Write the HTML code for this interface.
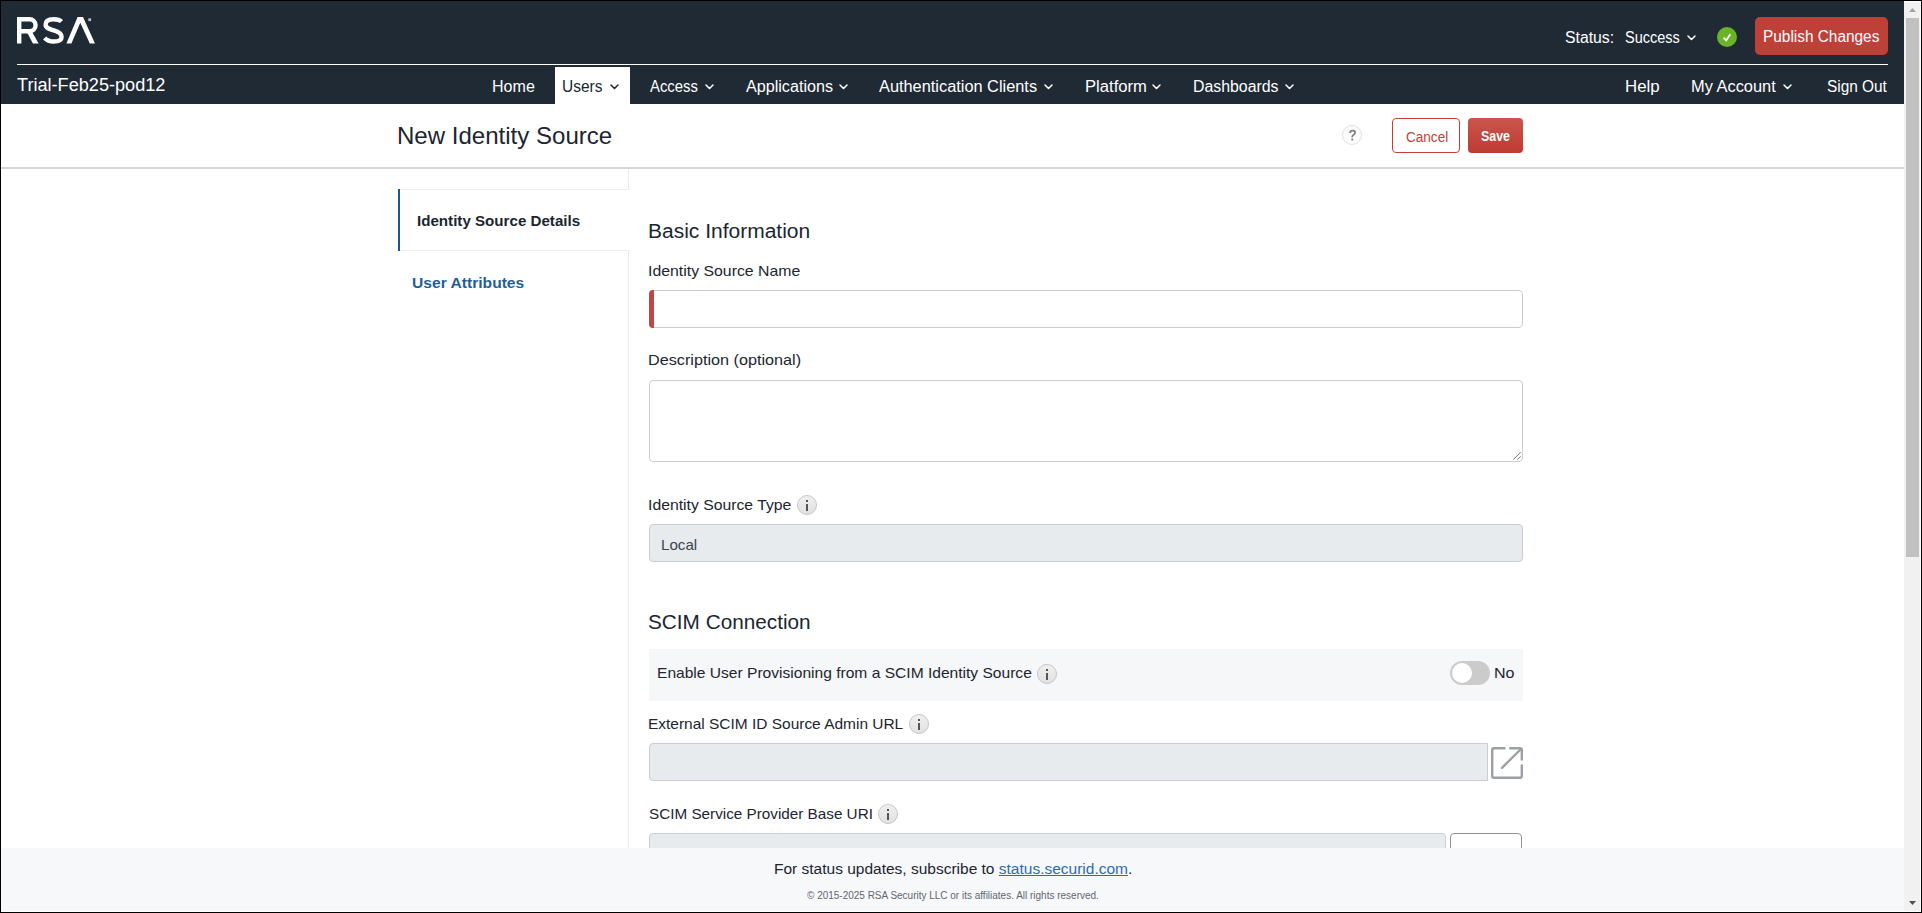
<!DOCTYPE html>
<html><head><meta charset="utf-8">
<style>
html,body{margin:0;padding:0;}
body{width:1922px;height:913px;position:relative;overflow:hidden;background:#000;font-family:"Liberation Sans",sans-serif;}
.a{position:absolute;}
.t{position:absolute;line-height:1;white-space:nowrap;transform-origin:0 0;}
.info{position:absolute;width:20px;height:20px;box-sizing:border-box;border:1px solid #c6c6c6;border-radius:50%;background:linear-gradient(#f0f0f0,#e1e1e1);}
.info:before{content:"";position:absolute;left:8px;top:4px;width:2px;height:2px;background:#555;}
.info:after{content:"";position:absolute;left:8px;top:8px;width:2px;height:7px;background:#555;}
.inp{position:absolute;box-sizing:border-box;border:1px solid #c9ced5;border-radius:4px;background:#fff;}
.dis{background:#e8ebee;}
</style></head>
<body>
<div class="a" style="left:1px;top:1px;width:1903px;height:911px;background:#fff"></div>
<div class="a" style="left:1px;top:1px;width:1903px;height:103px;background:#1f2a35"></div>
<svg class="a" style="left:0;top:0" width="120" height="60" viewBox="0 0 120 60">
  <g fill="none" stroke="#fff" stroke-width="4.4">
    <path d="M19.2 17 V43.5"/>
    <path d="M17 19.2 H29.6 A6 6 0 0 1 29.6 31.2 H19.2"/>
        <path d="M61.5 21.5 C59.5 19.5 56.5 19.2 53.5 19.2 C48.5 19.2 45.6 21.2 45.6 24.6 C45.6 28.2 49.5 29.2 53.8 30.4 C58.3 31.6 61.6 33.2 61.6 37 C61.6 40.6 58 41.5 53.6 41.5 C49.6 41.5 46.8 40.3 44.6 38"/>
  </g>
  <path fill="#fff" d="M25.4 29.2 L30.6 29.2 L38.6 43.5 L32.9 43.5 Z"/>
  <path fill="#fff" d="M66.4 43.5 L77.6 17 H83 L95 43.5 H89.8 L80.3 22.8 L71.4 43.5 Z"/>
  <rect x="88.3" y="18.3" width="2.8" height="2.8" fill="#b9bcbf"/>
</svg>
<div class="a" style="left:17px;top:64px;width:1871px;height:1px;background:#fff"></div>
<div class="a" style="left:555px;top:67px;width:75px;height:37px;background:#fff"></div>
<svg class="a" style="left:608.5px;top:82.5px" width="11" height="8" viewBox="0 0 11 8"><path d="M2 2 L5.5 5.5 L9 2" fill="none" stroke="#1c2530" stroke-width="1.5" stroke-linecap="round" stroke-linejoin="round"/></svg>
<svg class="a" style="left:703.5px;top:82.5px" width="11" height="8" viewBox="0 0 11 8"><path d="M2 2 L5.5 5.5 L9 2" fill="none" stroke="#fff" stroke-width="1.5" stroke-linecap="round" stroke-linejoin="round"/></svg>
<svg class="a" style="left:838px;top:82.5px" width="11" height="8" viewBox="0 0 11 8"><path d="M2 2 L5.5 5.5 L9 2" fill="none" stroke="#fff" stroke-width="1.5" stroke-linecap="round" stroke-linejoin="round"/></svg>
<svg class="a" style="left:1042.5px;top:82.5px" width="11" height="8" viewBox="0 0 11 8"><path d="M2 2 L5.5 5.5 L9 2" fill="none" stroke="#fff" stroke-width="1.5" stroke-linecap="round" stroke-linejoin="round"/></svg>
<svg class="a" style="left:1151px;top:82.5px" width="11" height="8" viewBox="0 0 11 8"><path d="M2 2 L5.5 5.5 L9 2" fill="none" stroke="#fff" stroke-width="1.5" stroke-linecap="round" stroke-linejoin="round"/></svg>
<svg class="a" style="left:1283.5px;top:82.5px" width="11" height="8" viewBox="0 0 11 8"><path d="M2 2 L5.5 5.5 L9 2" fill="none" stroke="#fff" stroke-width="1.5" stroke-linecap="round" stroke-linejoin="round"/></svg>
<svg class="a" style="left:1782px;top:82.5px" width="11" height="8" viewBox="0 0 11 8"><path d="M2 2 L5.5 5.5 L9 2" fill="none" stroke="#fff" stroke-width="1.5" stroke-linecap="round" stroke-linejoin="round"/></svg>
<svg class="a" style="left:1685.5px;top:34px" width="11" height="8" viewBox="0 0 11 8"><path d="M2 2 L5.5 5.5 L9 2" fill="none" stroke="#fff" stroke-width="1.5" stroke-linecap="round" stroke-linejoin="round"/></svg>
<svg class="a" style="left:1717px;top:27px" width="20" height="20" viewBox="0 0 20 20"><circle cx="10" cy="10" r="10" fill="#6ab42a"/><path d="M6.5 10.6 L9.2 13.3 L13.3 7.3" fill="none" stroke="#fff" stroke-width="1.8"/></svg>
<div class="a" style="left:1755px;top:17px;width:133px;height:38px;border-radius:5px;background:#bd4139"></div>

<div class="a" style="left:1342px;top:125px;width:20px;height:20px;box-sizing:border-box;border:1.5px solid #e2e2e2;border-radius:50%;background:#fbfbfb"></div>
<svg class="a" style="left:1340px;top:120px" width="30" height="30" viewBox="1340 120 30 30"><path d="M1350.1 132.9 C1350.1 131.3 1351.2 130.7 1352.6 130.7 C1354.2 130.7 1355.1 131.5 1355.1 132.7 C1355.1 134 1354 134.5 1353.1 135.2 C1352.4 135.8 1352.2 136.3 1352.2 137.3" fill="none" stroke="#7d7d7d" stroke-width="1.7"/><rect x="1351.3" y="138.6" width="1.9" height="1.8" fill="#7d7d7d"/></svg>
<div class="a" style="left:1392px;top:118px;width:68px;height:35px;box-sizing:border-box;border:1px solid #c4413a;border-radius:4px;background:#fff"></div>
<div class="a" style="left:1468px;top:118px;width:55px;height:35px;border-radius:4px;background:linear-gradient(#c9564e,#bd3a32)"></div>
<div class="a" style="left:1px;top:167px;width:1903px;height:2px;background:#d6d6d6"></div>

<div class="a" style="left:628px;top:169px;width:1px;height:679px;background:#e9e9e9"></div>
<div class="a" style="left:398px;top:189px;width:232px;height:62px;box-sizing:border-box;border-top:1px solid #ededed;border-bottom:1px solid #ededed;background:#fff"></div>
<div class="a" style="left:398px;top:189px;width:2px;height:62px;background:#1d5591"></div>

<div class="inp" style="left:649px;top:290px;width:874px;height:38px"></div>
<div class="a" style="left:649px;top:290px;width:5px;height:38px;background:#b94a48;border-radius:4px 0 0 4px"></div>
<div class="inp" style="left:649px;top:380px;width:874px;height:82px"></div>
<svg class="a" style="left:1512px;top:451px" width="9" height="9" viewBox="0 0 9 9"><path d="M8.6 1.2 L1.3 8.6 M8.6 5.3 L5.3 8.6" stroke="#6e6e6e" stroke-width="1"/></svg>
<div class="info" style="left:797px;top:495px"></div>
<div class="inp dis" style="left:649px;top:524px;width:874px;height:38px"></div>
<div class="a" style="left:649px;top:649px;width:874px;height:52px;background:#f6f7f9"></div>
<div class="info" style="left:1037px;top:664px"></div>
<div class="a" style="left:1450px;top:661px;width:40px;height:24px;border-radius:12px;background:#cbcbcb"></div>
<div class="a" style="left:1452px;top:663px;width:20px;height:20px;border-radius:50%;background:#fff"></div>
<div class="info" style="left:909px;top:714px"></div>
<div class="inp dis" style="left:649px;top:743px;width:839px;height:38px;border-radius:4px 0 0 4px"></div>
<svg class="a" style="left:1490px;top:746px" width="34" height="34" viewBox="0 0 34 34"><g fill="none" stroke="#9ca0a4" stroke-width="2.4" stroke-linecap="round"><path d="M14.5 2.2 H4 Q2.2 2.2 2.2 4 V30 Q2.2 31.8 4 31.8 H30 Q31.8 31.8 31.8 30 V19.5"/><path d="M20.2 2.2 H30 Q31.8 2.2 31.8 4 V13.5"/><path d="M12 21.8 L30.5 3.5"/></g></svg>
<div class="info" style="left:878px;top:804px"></div>
<div class="inp dis" style="left:649px;top:833px;width:797px;height:38px"></div>
<div class="inp" style="left:1450px;top:833px;width:72px;height:38px;border-color:#8f9498"></div>

<div class="a" style="left:1px;top:848px;width:1903px;height:63px;background:#f7f8fa"></div>
<div id="trial" class="t" style="left:17.00px;top:76px;font-size:18px;font-weight:normal;color:#fff;transform:scaleX(1.0068)">Trial-Feb25-pod12</div>
<div id="home" class="t" style="left:491.69px;top:79px;font-size:16px;font-weight:normal;color:#fff;transform:scaleX(1.0032)">Home</div>
<div id="users" class="t" style="left:561.94px;top:79px;font-size:16px;font-weight:normal;color:#1c2530;transform:scaleX(0.9664)">Users</div>
<div id="access" class="t" style="left:650.00px;top:79px;font-size:16px;font-weight:normal;color:#fff;transform:scaleX(0.9290)">Access</div>
<div id="apps" class="t" style="left:745.80px;top:79px;font-size:16px;font-weight:normal;color:#fff;transform:scaleX(1.0082)">Applications</div>
<div id="auth" class="t" style="left:879.20px;top:79px;font-size:16px;font-weight:normal;color:#fff;transform:scaleX(1.0213)">Authentication Clients</div>
<div id="platform" class="t" style="left:1084.77px;top:79px;font-size:16px;font-weight:normal;color:#fff;transform:scaleX(1.0384)">Platform</div>
<div id="dash" class="t" style="left:1192.77px;top:79px;font-size:16px;font-weight:normal;color:#fff;transform:scaleX(0.9913)">Dashboards</div>
<div id="help" class="t" style="left:1625.33px;top:79px;font-size:16px;font-weight:normal;color:#fff;transform:scaleX(1.0509)">Help</div>
<div id="myacc" class="t" style="left:1690.98px;top:79px;font-size:16px;font-weight:normal;color:#fff;transform:scaleX(1.0244)">My Account</div>
<div id="signout" class="t" style="left:1827.20px;top:79px;font-size:16px;font-weight:normal;color:#fff;transform:scaleX(0.9621)">Sign Out</div>
<div id="status" class="t" style="left:1564.71px;top:30px;font-size:16px;font-weight:normal;color:#fff;transform:scaleX(0.9859)">Status:</div>
<div id="success" class="t" style="left:1624.59px;top:30px;font-size:16px;font-weight:normal;color:#fff;transform:scaleX(0.9053)">Success</div>
<div id="publish" class="t" style="left:1763.04px;top:29px;font-size:16px;font-weight:normal;color:#fff;transform:scaleX(0.9618)">Publish Changes</div>
<div id="title" class="t" style="left:397.00px;top:124px;font-size:24px;font-weight:normal;color:#1c2530;transform:scaleX(1.0019)">New Identity Source</div>
<div id="cancel" class="t" style="left:1405.62px;top:130px;font-size:14px;font-weight:normal;color:#c0413a;transform:scaleX(0.9680)">Cancel</div>
<div id="save" class="t" style="left:1481.00px;top:129px;font-size:14px;font-weight:bold;color:#fff;transform:scaleX(0.8834)">Save</div>
<div id="isd" class="t" style="left:417.00px;top:213px;font-size:15px;font-weight:bold;color:#1c2530;transform:scaleX(1.0087)">Identity Source Details</div>
<div id="ua" class="t" style="left:412.35px;top:275px;font-size:15px;font-weight:bold;color:#1f5f99;transform:scaleX(1.0412)">User Attributes</div>
<div id="basic" class="t" style="left:648.35px;top:221px;font-size:20px;font-weight:normal;color:#1c2530;transform:scaleX(1.0497)">Basic Information</div>
<div id="isn" class="t" style="left:647.94px;top:263px;font-size:15px;font-weight:normal;color:#1c2530;transform:scaleX(1.0559)">Identity Source Name</div>
<div id="desc" class="t" style="left:647.62px;top:352px;font-size:15px;font-weight:normal;color:#1c2530;transform:scaleX(1.0801)">Description (optional)</div>
<div id="ist" class="t" style="left:647.95px;top:497px;font-size:15px;font-weight:normal;color:#1c2530;transform:scaleX(1.0505)">Identity Source Type</div>
<div id="local" class="t" style="left:660.91px;top:537px;font-size:15px;font-weight:normal;color:#3a4450;transform:scaleX(1.0098)">Local</div>
<div id="scim" class="t" style="left:647.66px;top:612px;font-size:20px;font-weight:normal;color:#1c2530;transform:scaleX(1.0375)">SCIM Connection</div>
<div id="enable" class="t" style="left:656.56px;top:665px;font-size:15px;font-weight:normal;color:#1c2530;transform:scaleX(1.0383)">Enable User Provisioning from a SCIM Identity Source</div>
<div id="no" class="t" style="left:1493.75px;top:665px;font-size:15px;font-weight:normal;color:#1c2530;transform:scaleX(1.0708)">No</div>
<div id="ext" class="t" style="left:648.17px;top:716px;font-size:15px;font-weight:normal;color:#1c2530;transform:scaleX(1.0308)">External SCIM ID Source Admin URL</div>
<div id="sp" class="t" style="left:649.00px;top:806px;font-size:15px;font-weight:normal;color:#1c2530;transform:scaleX(1.0174)">SCIM Service Provider Base URI</div>
<div id="foot" class="t" style="left:773.80px;top:861px;font-size:15.5px;font-weight:normal;color:#1c2530;transform:scaleX(0.9997)">For status updates, subscribe to <span style="color:#2b6cb0;text-decoration:underline">status.securid.com</span>.</div>
<div id="copy" class="t" style="left:806.80px;top:891px;font-size:10px;font-weight:normal;color:#5f6670;transform:scaleX(0.9983)">© 2015-2025 RSA Security LLC or its affiliates. All rights reserved.</div>

<div class="a" style="left:1904px;top:1px;width:17px;height:911px;background:#fff"></div>
<div class="a" style="left:1904px;top:2px;width:16px;height:909px;background:#f1f1f1"></div>
<div class="a" style="left:1906px;top:18px;width:13px;height:539px;background:#c1c1c1"></div>
<svg class="a" style="left:1905px;top:2px" width="15" height="15" viewBox="0 0 15 15"><path d="M4 10 L7.5 6 L11 10 Z" fill="#a3a3a3"/></svg>
<svg class="a" style="left:1905px;top:896px" width="15" height="15" viewBox="0 0 15 15"><path d="M4 5 L7.5 9 L11 5 Z" fill="#505050"/></svg>
</body></html>
